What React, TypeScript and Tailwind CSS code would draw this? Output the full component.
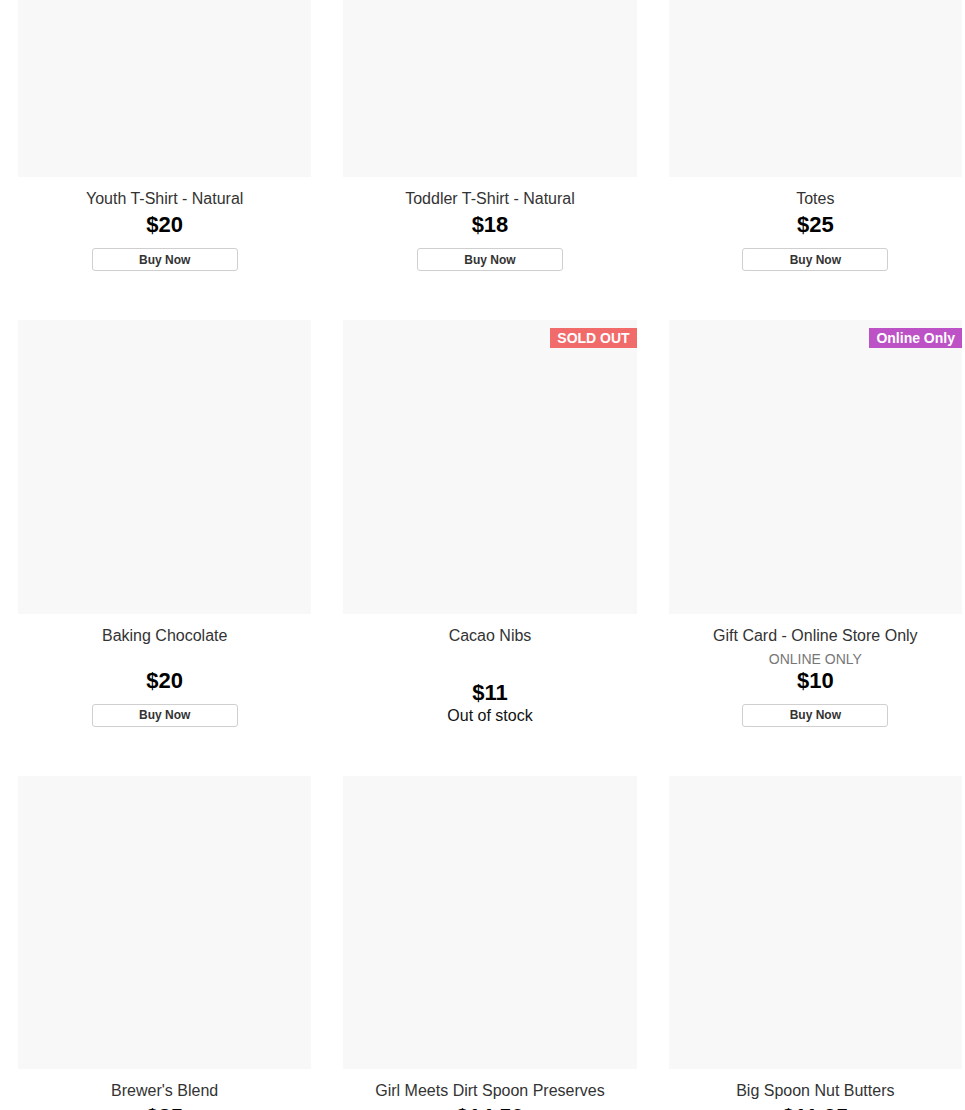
type Product = {
  name: string;
  price: string;
  note?: string;
  badge?: "sold" | "online";
  soldOut?: boolean;
};

const products: Product[] = [
  { name: "Youth T-Shirt - Natural", price: "$20" },
  { name: "Toddler T-Shirt - Natural", price: "$18" },
  { name: "Totes", price: "$25" },
  { name: "Baking Chocolate", price: "$20" },
  { name: "Cacao Nibs", price: "$11", badge: "sold", soldOut: true },
  {
    name: "Gift Card - Online Store Only",
    price: "$10",
    note: "ONLINE ONLY",
    badge: "online",
  },
  { name: "Brewer's Blend", price: "$35" },
  { name: "Girl Meets Dirt Spoon Preserves", price: "$14.50" },
  { name: "Big Spoon Nut Butters", price: "$11.95" },
];

function ProductCard({ product }: { product: Product }) {
  return (
    <div className="flex flex-col">
      <div className="relative aspect-square w-full bg-[#f8f8f8]">
        {product.badge === "sold" && (
          <span className="absolute right-0 top-2 h-5 bg-[#f26b6b] px-[7px] text-[14px] font-bold leading-5 text-white">
            SOLD OUT
          </span>
        )}
        {product.badge === "online" && (
          <span className="absolute right-0 top-2 h-5 bg-[#bc52c6] px-[7px] text-[14px] font-bold leading-5 text-white">
            Online Only
          </span>
        )}
      </div>

      <div className="flex flex-1 flex-col items-center text-center">
        <h3 className="mt-3 text-[16px] leading-5 text-[#333]">{product.name}</h3>

        <div className="mt-auto flex flex-col items-center">
          {product.note ? (
            <p className="mb-[2px] mt-[5px] text-[14px] leading-4 text-[#777]">{product.note}</p>
          ) : (
            <div className="h-[4px]" />
          )}
          <p className="text-[22px] font-bold leading-6 text-black">{product.price}</p>
          {product.soldOut ? (
            <p className="flex h-[22px] items-center pt-[1px] text-[16px] text-[#111]">
              Out of stock
            </p>
          ) : (
            <button
              type="button"
              className="mt-[11px] h-[23px] w-[146px] rounded-[3px] border border-[#cfcfcf] bg-white text-[12px] font-bold text-[#333]"
            >
              Buy Now
            </button>
          )}
        </div>
      </div>
    </div>
  );
}

export default function App() {
  return (
    <div
      className="h-[1110px] overflow-hidden bg-white"
      style={{ fontFamily: '"Liberation Sans", Arial, sans-serif' }}
    >
      <div className="mt-[-116px] grid grid-cols-3 gap-x-8 gap-y-[49px] pl-[18px] pr-[3px]">
        {products.map((p) => (
          <ProductCard key={p.name} product={p} />
        ))}
      </div>
    </div>
  );
}
